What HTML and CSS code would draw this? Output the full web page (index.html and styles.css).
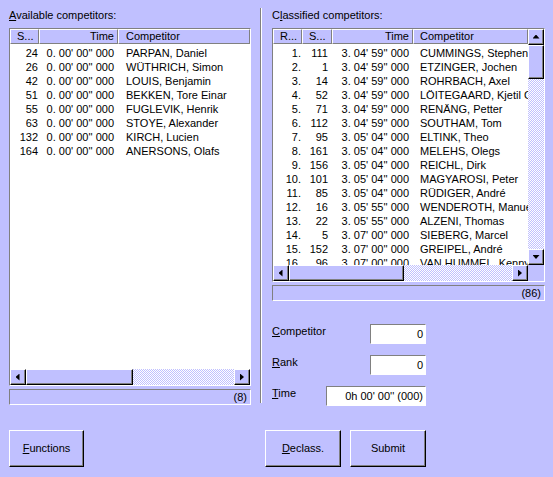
FILE: index.html
```html
<!DOCTYPE html>
<html>
<head>
<meta charset="utf-8">
<link rel="stylesheet" href="styles.css">
</head>
<body>
<div class="window">
  <div class="panes">
    <section class="pane pane-left">
      <div class="caption"><u>A</u>vailable competitors:</div>
      <div class="listbox listbox-left">
        <div class="lv lv-left">
          <div class="lv-head">
            <div class="hc c-s">S...</div>
            <div class="hc c-t">Time</div>
            <div class="hc c-n">Competitor</div>
          </div>
          <div class="lv-body">
            <div class="row"><span class="c-s">24</span><span class="c-t">0. 00' 00'' 000</span><span class="c-n">PARPAN, Daniel</span></div>
            <div class="row"><span class="c-s">26</span><span class="c-t">0. 00' 00'' 000</span><span class="c-n">WÜTHRICH, Simon</span></div>
            <div class="row"><span class="c-s">42</span><span class="c-t">0. 00' 00'' 000</span><span class="c-n">LOUIS, Benjamin</span></div>
            <div class="row"><span class="c-s">51</span><span class="c-t">0. 00' 00'' 000</span><span class="c-n">BEKKEN, Tore Einar</span></div>
            <div class="row"><span class="c-s">55</span><span class="c-t">0. 00' 00'' 000</span><span class="c-n">FUGLEVIK, Henrik</span></div>
            <div class="row"><span class="c-s">63</span><span class="c-t">0. 00' 00'' 000</span><span class="c-n">STOYE, Alexander</span></div>
            <div class="row"><span class="c-s">132</span><span class="c-t">0. 00' 00'' 000</span><span class="c-n">KIRCH, Lucien</span></div>
            <div class="row"><span class="c-s">164</span><span class="c-t">0. 00' 00'' 000</span><span class="c-n">ANERSONS, Olafs</span></div>
          </div>
        </div>
        <div class="hscroll hs-left">
          <div class="sbtn"><span class="arr arr-l"></span></div>
          <div class="thumb"></div>
          <div class="track"></div>
          <div class="sbtn"><span class="arr arr-r"></span></div>
        </div>
      </div>
      <div class="status">(8)</div>
    </section>

    <div class="separator"></div>

    <section class="pane pane-right">
      <div class="caption">C<u>l</u>assified competitors:</div>
      <div class="listbox listbox-right">
        <div class="lv lv-right">
          <div class="lv-head">
            <div class="hc c-r">R...</div>
            <div class="hc c-s2">S...</div>
            <div class="hc c-t2">Time</div>
            <div class="hc c-n2">Competitor</div>
          </div>
          <div class="lv-body">
            <div class="row"><span class="c-r">1.</span><span class="c-s2">111</span><span class="c-t2">3. 04' 59'' 000</span><span class="c-n2">CUMMINGS, Stephen</span></div>
            <div class="row"><span class="c-r">2.</span><span class="c-s2">1</span><span class="c-t2">3. 04' 59'' 000</span><span class="c-n2">ETZINGER, Jochen</span></div>
            <div class="row"><span class="c-r">3.</span><span class="c-s2">14</span><span class="c-t2">3. 04' 59'' 000</span><span class="c-n2">ROHRBACH, Axel</span></div>
            <div class="row"><span class="c-r">4.</span><span class="c-s2">52</span><span class="c-t2">3. 04' 59'' 000</span><span class="c-n2">LÖITEGAARD, Kjetil G</span></div>
            <div class="row"><span class="c-r">5.</span><span class="c-s2">71</span><span class="c-t2">3. 04' 59'' 000</span><span class="c-n2">RENÄNG, Petter</span></div>
            <div class="row"><span class="c-r">6.</span><span class="c-s2">112</span><span class="c-t2">3. 04' 59'' 000</span><span class="c-n2">SOUTHAM, Tom</span></div>
            <div class="row"><span class="c-r">7.</span><span class="c-s2">95</span><span class="c-t2">3. 05' 04'' 000</span><span class="c-n2">ELTINK, Theo</span></div>
            <div class="row"><span class="c-r">8.</span><span class="c-s2">161</span><span class="c-t2">3. 05' 04'' 000</span><span class="c-n2">MELEHS, Olegs</span></div>
            <div class="row"><span class="c-r">9.</span><span class="c-s2">156</span><span class="c-t2">3. 05' 04'' 000</span><span class="c-n2">REICHL, Dirk</span></div>
            <div class="row"><span class="c-r">10.</span><span class="c-s2">101</span><span class="c-t2">3. 05' 04'' 000</span><span class="c-n2">MAGYAROSI, Peter</span></div>
            <div class="row"><span class="c-r">11.</span><span class="c-s2">85</span><span class="c-t2">3. 05' 04'' 000</span><span class="c-n2">RÜDIGER, André</span></div>
            <div class="row"><span class="c-r">12.</span><span class="c-s2">16</span><span class="c-t2">3. 05' 55'' 000</span><span class="c-n2">WENDEROTH, Manuel</span></div>
            <div class="row"><span class="c-r">13.</span><span class="c-s2">22</span><span class="c-t2">3. 05' 55'' 000</span><span class="c-n2">ALZENI, Thomas</span></div>
            <div class="row"><span class="c-r">14.</span><span class="c-s2">5</span><span class="c-t2">3. 07' 00'' 000</span><span class="c-n2">SIEBERG, Marcel</span></div>
            <div class="row"><span class="c-r">15.</span><span class="c-s2">152</span><span class="c-t2">3. 07' 00'' 000</span><span class="c-n2">GREIPEL, André</span></div>
            <div class="row"><span class="c-r">16.</span><span class="c-s2">96</span><span class="c-t2">3. 07' 00'' 000</span><span class="c-n2">VAN HUMMEL, Kenny</span></div>
          </div>
        </div>
        <div class="vscroll">
          <div class="sbtn"><span class="arr arr-u"></span></div>
          <div class="thumb"></div>
          <div class="track"></div>
          <div class="sbtn"><span class="arr arr-d"></span></div>
        </div>
        <div class="hscroll hs-right">
          <div class="sbtn"><span class="arr arr-l"></span></div>
          <div class="thumb"></div>
          <div class="track"></div>
          <div class="sbtn"><span class="arr arr-r"></span></div>
        </div>
        <div class="corner"></div>
      </div>
      <div class="status">(86)</div>

      <div class="form">
        <div class="frow">
          <label class="flabel"><u>C</u>ompetitor</label>
          <div class="field field-short">0</div>
        </div>
        <div class="frow">
          <label class="flabel"><u>R</u>ank</label>
          <div class="field field-short">0</div>
        </div>
        <div class="frow">
          <label class="flabel"><u>T</u>ime</label>
          <div class="field field-long">0h 00' 00'' (000)</div>
        </div>
      </div>
    </section>
  </div>

  <div class="buttons">
    <button class="btn btn-functions"><u>F</u>unctions</button>
    <button class="btn btn-declass"><u>D</u>eclass.</button>
    <button class="btn btn-submit">Submit</button>
  </div>
</div>
</body>
</html>
```

FILE: styles.css
```css
* { box-sizing: border-box; }

html, body {
  margin: 0;
  padding: 0;
}

body {
  width: 553px;
  height: 477px;
  overflow: hidden;
  background: #c0c0ff;
  color: #000;
  font-family: "Liberation Sans", Arial, sans-serif;
  font-size: 11px;
  line-height: 13px;
}

.window {
  padding: 9px 0 0 9px;
  height: 477px;
}

.panes {
  display: flex;
  align-items: flex-start;
  height: 421px;
}

.pane {
  display: flex;
  flex-direction: column;
}

.pane-left { width: 242px; }

.pane-right {
  width: 273px;
  margin-left: 10px;
}

.caption {
  height: 13px;
  margin-bottom: 6px;
  white-space: nowrap;
}

.separator {
  width: 2px;
  height: 395px;
  margin-top: -1px;
  margin-left: 9px;
  border-left: 1px solid #808080;
  border-right: 1px solid #ffffff;
}

/* ---------- list boxes ---------- */
.listbox {
  background: #fff;
  border: 1px solid;
  border-color: #808080 #ffffff #ffffff #808080;
  display: grid;
  overflow: hidden;
}

.listbox-left {
  height: 358px;
  grid-template-columns: 1fr;
  grid-template-rows: 1fr 16px;
}

.listbox-right {
  height: 254px;
  grid-template-columns: 1fr 16px;
  grid-template-rows: 1fr 16px;
}

.lv {
  overflow: hidden;
  display: flex;
  flex-direction: column;
  min-width: 0;
  min-height: 0;
}

.lv-head {
  display: flex;
  height: 15px;
  flex: none;
  background: #c0c0ff;
}

.hc {
  flex: none;
  height: 15px;
  line-height: 13px;
  border: 1px solid;
  border-color: #ffffff #808080 #808080 #ffffff;
  white-space: nowrap;
  overflow: hidden;
}

.lv-body {
  flex: 1;
  padding-top: 2px;
  overflow: hidden;
}

.row {
  display: flex;
  height: 14px;
  line-height: 14px;
  white-space: nowrap;
}

.row span {
  flex: none;
  overflow: hidden;
}

/* left list columns */
.lv-left .c-s { width: 29px; text-align: right; padding-right: 1px; }
.lv-left .hc.c-s { text-align: left; padding-left: 6px; }
.lv-left .c-t { width: 79px; text-align: right; padding-right: 4px; }
.lv-left .hc.c-t { padding-right: 3px; }
.lv-left .c-n { width: 132px; padding-left: 8px; }
.lv-left .hc.c-n { padding-left: 7px; }

/* right list columns */
.lv-right .c-r { width: 29px; text-align: right; padding-right: 1px; }
.lv-right .hc.c-r { text-align: left; padding-left: 6px; }
.lv-right .c-s2 { width: 30px; text-align: right; padding-right: 4px; }
.lv-right .hc.c-s2 { text-align: left; padding-left: 6px; }
.lv-right .c-t2 { width: 81px; text-align: right; padding-right: 4px; }
.lv-right .hc.c-t2 { padding-right: 3px; }
.lv-right .c-n2 { width: 115px; padding-left: 7px; text-overflow: clip; }
.lv-right .hc.c-n2 { padding-left: 6px; }

/* ---------- scroll bars ---------- */
.hscroll {
  display: flex;
  height: 16px;
  min-width: 0;
}

.hs-left .thumb { width: 107px; }
.hs-right .thumb { width: 115px; }

.vscroll {
  display: flex;
  flex-direction: column;
  width: 16px;
  grid-row: 1;
  grid-column: 2;
}

.vscroll .thumb { height: 34px; }

.sbtn, .thumb {
  flex: none;
  width: 16px;
  height: 16px;
  background: #c0c0ff;
  border: 1px solid;
  border-color: #ffffff #000000 #000000 #ffffff;
  box-shadow: inset -1px -1px 0 #808080;
  display: flex;
  align-items: center;
  justify-content: center;
}

.hscroll .thumb { height: 16px; }
.vscroll .thumb { width: 16px; }

.track {
  flex: 1;
  background: repeating-conic-gradient(#ffffff 0 25%, #c0c0ff 0 50%) 0 0 / 2px 2px;
}

.corner {
  background: #c0c0ff;
}

.arr {
  display: block;
  background: #000;
}

.arr-u { width: 7px; height: 4px; clip-path: polygon(50% 0, 100% 100%, 0 100%); margin-top: -1px; }
.arr-d { width: 7px; height: 4px; clip-path: polygon(0 0, 100% 0, 50% 100%); }
.arr-l { width: 4px; height: 7px; clip-path: polygon(0 50%, 100% 0, 100% 100%); margin-left: -1px; }
.arr-r { width: 4px; height: 7px; clip-path: polygon(0 0, 100% 50%, 0 100%); }

/* ---------- status ---------- */
.status {
  margin-top: 3px;
  height: 16px;
  line-height: 14px;
  text-align: right;
  padding-right: 3px;
  border: 1px solid;
  border-color: #808080 #ffffff #ffffff #808080;
}

/* ---------- form ---------- */
.form {
  width: 154px;
  margin-top: 23px;
  display: flex;
  flex-direction: column;
  gap: 11px;
}

.frow {
  display: flex;
  justify-content: space-between;
  align-items: flex-start;
  height: 20px;
}

.flabel {
  padding-top: 1px;
}

.field {
  height: 20px;
  line-height: 18px;
  background: #fff;
  text-align: right;
  padding-right: 2px;
  border: 1px solid;
  border-color: #808080 #ffffff #ffffff #808080;
  white-space: nowrap;
}

.field-short { width: 56px; }
.field-long { width: 100px; }

/* ---------- buttons ---------- */
.buttons {
  display: flex;
}

.btn {
  height: 37px;
  width: 75px;
  padding: 0;
  font: inherit;
  color: #000;
  background: #c0c0ff;
  border: 1px solid;
  border-color: #ffffff #000000 #000000 #ffffff;
  box-shadow: inset -1px -1px 0 #808080;
  text-align: center;
}

.btn-functions { width: 75px; }
.btn-declass { margin-left: 181px; width: 76px; }
.btn-submit { margin-left: 9px; width: 76px; }
```
